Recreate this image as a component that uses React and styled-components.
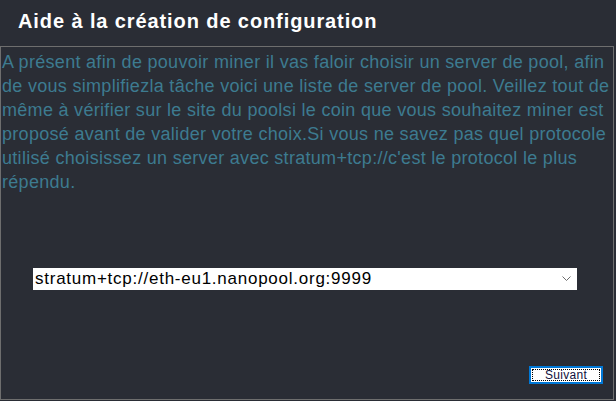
import React from 'react';
import styled, {createGlobalStyle} from 'styled-components';

const GlobalStyle = createGlobalStyle`
  html, body {
    margin: 0;
    padding: 0;
    background: #2a2d35;
    font-family: "Liberation Sans", Arial, sans-serif;
  }
`;

const Window = styled.div`
  width: 616px;
  height: 401px;
  display: flex;
  flex-direction: column;
  background: #2a2d35;
`;

const Header = styled.div`
  height: 46px;
  display: flex;
  align-items: center;
  padding-left: 18px;
  box-sizing: border-box;
`;

const Title = styled.h1`
  margin: 0;
  font-size: 20px;
  font-weight: bold;
  letter-spacing: 0.9px;
  color: #ffffff;
  padding-bottom: 3px;
`;

const Panel = styled.div`
  width: 614px;
  height: 354px;
  box-sizing: border-box;
  border: 1px solid #6e6e6e;
  display: flex;
  flex-direction: column;
`;

const Intro = styled.p`
  margin: 0;
  padding: 3px 0 0 1px;
  font-size: 18px;
  line-height: 24px;
  letter-spacing: 0.3px;
  color: #3d7b90;
`;

const SelectRow = styled.div`
  margin-top: 74px;
  padding-left: 32px;
`;

const Select = styled.div`
  width: 544px;
  height: 22px;
  background: #fff;
  display: flex;
  align-items: center;
  justify-content: space-between;
  padding: 0 6px 0 2px;
  box-sizing: border-box;
  font-size: 17px;
  letter-spacing: 0.75px;
  color: #000;
`;

const Footer = styled.div`
  margin-top: auto;
  display: flex;
  justify-content: flex-end;
  padding: 0 10px 15px 0;
`;

const Button = styled.button`
  width: 74px;
  height: 18px;
  box-sizing: border-box;
  border: 2px solid #0078d7;
  background: #fff;
  padding: 1px;
  display: flex;
  font-family: "Liberation Sans", Arial, sans-serif;
`;

const FocusRect = styled.span`
  flex: 1;
  border: 1px dotted #000;
  display: flex;
  align-items: center;
  justify-content: center;
  font-size: 12px;
  letter-spacing: 0.3px;
  color: #101040;
  line-height: 1;
`;

const Chevron = () => (
  <svg width="9" height="6" viewBox="0 0 9 6">
    <path d="M0.5 0.5 L4.5 4.5 L8.5 0.5" fill="none" stroke="#6d6d6d" strokeWidth="1" />
  </svg>
);

export default function App() {
  return (
    <Window>
      <GlobalStyle />
      <Header>
        <Title>Aide à la création de configuration</Title>
      </Header>
      <Panel>
        <Intro>
          A présent afin de pouvoir miner il vas faloir choisir un server de pool, afin de vous simplifiezla tâche voici une liste de server de pool. Veillez tout de même à vérifier sur le site du poolsi le coin que vous souhaitez miner est proposé avant de valider votre choix.Si vous ne savez pas quel protocole utilisé choisissez un server avec stratum+tcp://c'est le protocol le plus répendu.
        </Intro>
        <SelectRow>
          <Select>
            <span>stratum+tcp://eth-eu1.nanopool.org:9999</span>
            <Chevron />
          </Select>
        </SelectRow>
        <Footer>
          <Button>
            <FocusRect>Suivant</FocusRect>
          </Button>
        </Footer>
      </Panel>
    </Window>
  );
}
